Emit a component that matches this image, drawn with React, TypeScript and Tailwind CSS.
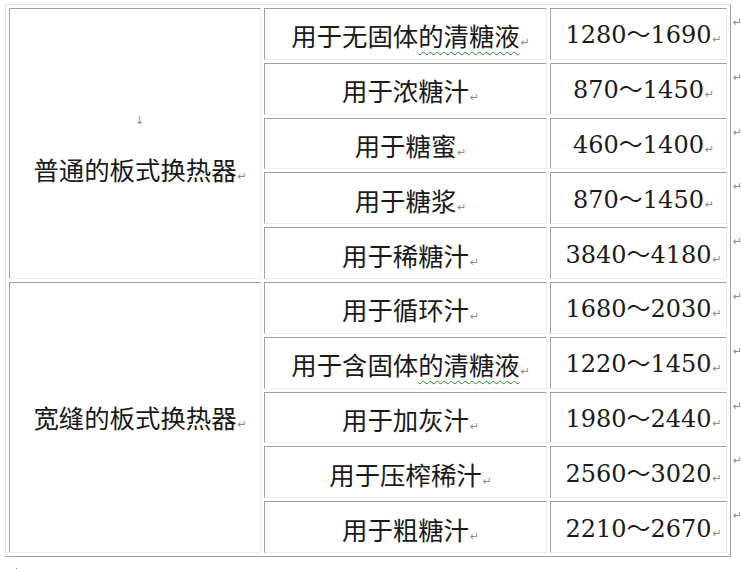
import React from 'react'

type Row = { name: React.ReactNode; range: string }

const groups: { label: string; lead?: boolean; rows: Row[] }[] = [
  {
    label: '普通的板式换热器',
    lead: true,
    rows: [
      { name: <>用于无固体<Wavy>的清糖液</Wavy></>, range: '1280～1690' },
      { name: '用于浓糖汁', range: '870～1450' },
      { name: '用于糖蜜', range: '460～1400' },
      { name: '用于糖浆', range: '870～1450' },
      { name: '用于稀糖汁', range: '3840～4180' },
    ],
  },
  {
    label: '宽缝的板式换热器',
    rows: [
      { name: '用于循环汁', range: '1680～2030' },
      { name: <>用于含固体<Wavy>的清糖液</Wavy></>, range: '1220～1450' },
      { name: '用于加灰汁', range: '1980～2440' },
      { name: '用于压榨稀汁', range: '2560～3020' },
      { name: '用于粗糖汁', range: '2210～2670' },
    ],
  },
]

function Wavy({ children }: { children: React.ReactNode }) {
  return (
    <span className="underline decoration-wavy decoration-[#1f8a1f] decoration-1 underline-offset-[5px]">
      {children}
    </span>
  )
}

// word-style paragraph mark, hangs after the text without shifting it
const Mark = () => (
  <span className="inline-block w-0 overflow-visible align-baseline">
    <span className="pl-[1px] text-[11px] leading-none text-[#8c8c8c] font-['DejaVu_Sans',sans-serif]">↵</span>
  </span>
)

const cell =
  'flex items-center justify-center border border-t-[#a0a0a0] border-l-[#a0a0a0] border-r-[#ececec] border-b-[#ececec] bg-white'

export default function App() {
  return (
    <div className="min-h-screen bg-white pl-[5px] pt-[4px] text-[#1a1a1a] font-['Noto_Sans_CJK_SC',sans-serif]">
      <div className="flex items-start">
        <div className="grid h-[553px] grid-cols-[252px_283px_177px] grid-rows-[repeat(10,minmax(0,1fr))] gap-[3px] border border-t-[#e6e6e6] border-l-[#e6e6e6] border-r-[#a0a0a0] border-b-[#a0a0a0] p-[3px]">
          {groups.map((g) => (
            <React.Fragment key={g.label}>
              <div className={`${cell} row-span-5 flex-col`}>
                {g.lead && (
                  <div className="h-[52px] w-full text-center leading-[52px]">
                    <span className="inline-block w-0 overflow-visible">
                      <span className="text-[11px] text-[#8c8c8c] font-['DejaVu_Sans',sans-serif]">↓</span>
                    </span>
                  </div>
                )}
                <div className="h-[52px] text-[25.4px] leading-[52px] whitespace-nowrap">
                  {g.label}
                  <Mark />
                </div>
              </div>
              {g.rows.map((r, i) => (
                <React.Fragment key={i}>
                  <div className={cell}>
                    <span className="text-[25.4px] leading-[52px] whitespace-nowrap pt-[3px]">
                      {r.name}
                      <Mark />
                    </span>
                  </div>
                  <div className={cell}>
                    <span className="text-[24px] leading-[52px] whitespace-nowrap pt-[3px] font-['DejaVu_Serif','Noto_Sans_CJK_SC',serif]">
                      {r.range}
                      <Mark />
                    </span>
                  </div>
                </React.Fragment>
              ))}
            </React.Fragment>
          ))}
        </div>
        <div className="ml-[2px] grid h-[553px] grid-rows-[repeat(10,minmax(0,1fr))] gap-[3px] py-[4px]">
          {Array.from({ length: 10 }).map((_, i) => (
            <div key={i} className="pt-[9px] text-[11px] leading-none text-[#8c8c8c] font-['DejaVu_Sans',sans-serif]">
              ↵
            </div>
          ))}
        </div>
      </div>
      {/* top of the last paragraph mark, cut by the window edge */}
      <div className="ml-[11px] mt-[11px] h-[1px] w-[1px] bg-[#8c8c8c]" />
    </div>
  )
}
